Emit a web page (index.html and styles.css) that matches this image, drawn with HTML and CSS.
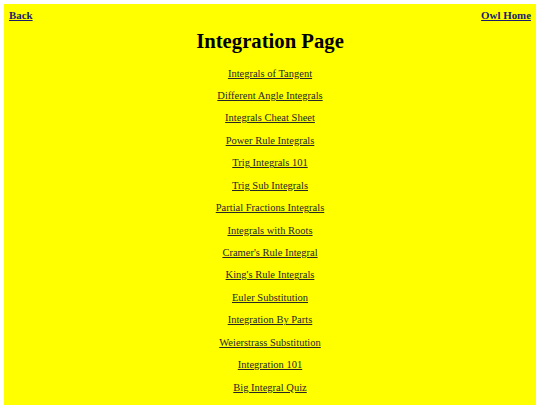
FILE: index.html
```html
<!DOCTYPE html>
<html lang="en">
<head>
<meta charset="utf-8">
<title>Integration Page</title>
<link rel="stylesheet" href="styles.css">
</head>
<body>
<div class="page">
  <nav class="topbar">
    <a class="toplink" href="#">Back</a>
    <a class="toplink" href="#">Owl Home</a>
  </nav>
  <h1 class="title">Integration Page</h1>
  <ul class="links">
    <li><a href="#">Integrals of Tangent</a></li>
    <li><a href="#">Different Angle Integrals</a></li>
    <li><a href="#">Integrals Cheat Sheet</a></li>
    <li><a href="#">Power Rule Integrals</a></li>
    <li><a href="#">Trig Integrals 101</a></li>
    <li><a href="#">Trig Sub Integrals</a></li>
    <li><a href="#">Partial Fractions Integrals</a></li>
    <li><a href="#">Integrals with Roots</a></li>
    <li><a href="#">Cramer's Rule Integral</a></li>
    <li><a href="#">King's Rule Integrals</a></li>
    <li><a href="#">Euler Substitution</a></li>
    <li><a href="#">Integration By Parts</a></li>
    <li><a href="#">Weierstrass Substitution</a></li>
    <li><a href="#">Integration 101</a></li>
    <li><a href="#">Big Integral Quiz</a></li>
  </ul>
</div>
</body>
</html>
```
FILE: styles.css
```css
html, body {
  margin: 0;
  padding: 0;
  background: #ffffff;
  overflow: hidden;
}
body {
  padding: 4px 4px 0 4px;
  font-family: "Liberation Serif", "Times New Roman", serif;
}
.page {
  background: #ffff00;
  height: calc(100vh - 4px);
  padding: 5px 5px 0 5px;
  box-sizing: border-box;
}
.topbar {
  display: flex;
  justify-content: space-between;
  line-height: 12px;
  font-size: 10.9px;
  font-weight: bold;
}
.toplink {
  color: #1c1c6e;
  text-decoration: underline;
}
.title {
  margin: 9px 0 0 0;
  font-size: 20.7px;
  font-weight: bold;
  text-align: center;
  color: #000000;
}
.links {
  list-style: none;
  margin: 14.5px 0 0 0;
  padding: 0;
  display: flex;
  flex-direction: column;
  align-items: center;
  gap: 10.45px;
  font-size: 10.5px;
  line-height: 12px;
}
.links a {
  color: #262626;
  text-decoration: underline;
}
```
